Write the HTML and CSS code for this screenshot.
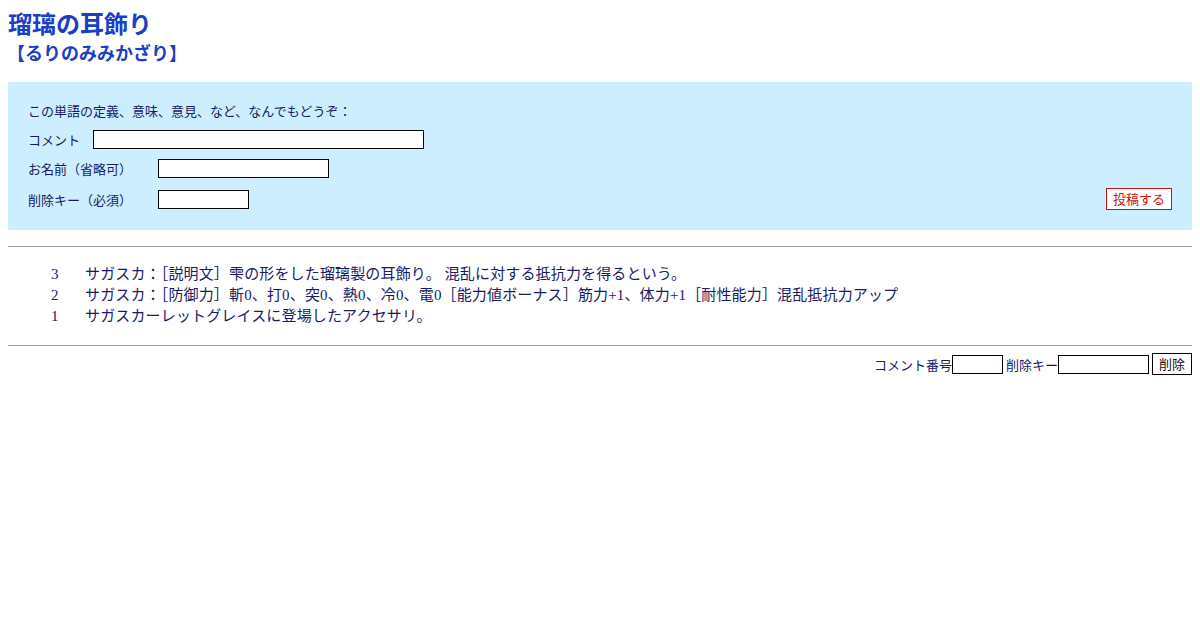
FILE: index.html
```html
<!DOCTYPE html>
<html lang="ja">
<head>
<meta charset="utf-8">
<title>瑠璃の耳飾り</title>
<link rel="stylesheet" href="styles.css">
</head>
<body>
<header class="head">
  <h1 class="title">瑠璃の耳飾り</h1>
  <div class="reading">【るりのみみかざり】</div>
</header>

<form class="post-box">
  <div class="intro">この単語の定義、意味、意見、など、なんでもどうぞ：</div>
  <div class="row">
    <label class="lbl lbl-short">コメント</label>
    <input class="field field-comment" type="text">
  </div>
  <div class="row">
    <label class="lbl">お名前（省略可）</label>
    <input class="field field-name" type="text">
  </div>
  <div class="row row-last">
    <label class="lbl">削除キー（必須）</label>
    <input class="field field-key" type="password">
    <button class="btn-post" type="button">投稿する</button>
  </div>
</form>

<hr class="rule rule-top">

<ol class="comments">
  <li class="comment"><span class="num">3</span><span class="text">サガスカ：［説明文］雫の形をした瑠璃製の耳飾り。 混乱に対する抵抗力を得るという。</span></li>
  <li class="comment"><span class="num">2</span><span class="text">サガスカ：［防御力］斬0、打0、突0、熱0、冷0、電0［能力値ボーナス］筋力+1、体力+1［耐性能力］混乱抵抗力アップ</span></li>
  <li class="comment"><span class="num">1</span><span class="text">サガスカーレットグレイスに登場したアクセサリ。</span></li>
</ol>

<hr class="rule rule-bottom">

<form class="delete-form">
  <label class="dlbl">コメント番号</label>
  <input class="field field-no" type="text">
  <label class="dlbl dlbl-gap">削除キー</label>
  <input class="field field-dkey" type="password">
  <button class="btn-del" type="button">削除</button>
</form>
</body>
</html>
```

FILE: styles.css
```css
html, body {
  margin: 0;
  padding: 0;
  background: #ffffff;
}
body {
  padding: 8px;
  font-family: "Liberation Serif", "Noto Sans CJK JP", serif;
  color: #1a1a66;
}
.head {
  font-family: "Noto Sans CJK JP", sans-serif;
  color: #1a3fc4;
}
.title {
  margin: 0;
  font-size: 24px;
  line-height: 30px;
  font-weight: bold;
}
.reading {
  font-size: 18px;
  line-height: 28px;
  font-weight: bold;
  margin-left: -1px;
}
.post-box {
  margin: 16px 0 0 0;
  background: #cceeff;
  padding: 20px 20px 20px 20px;
  display: flex;
  flex-direction: column;
  gap: 10px;
  font-family: "Noto Sans CJK JP", sans-serif;
  font-size: 13px;
  color: #1a1a66;
}
.intro {
  line-height: 18px;
}
.row {
  display: flex;
  align-items: center;
  height: 19px;
}
.row-last {
  height: 22px;
}
.lbl {
  width: 130px;
  flex: none;
  line-height: 19px;
}
.lbl-short {
  width: 65px;
}
.field {
  box-sizing: border-box;
  height: 19px;
  border: 1px solid #000000;
  background: #ffffff;
  padding: 0 2px;
  margin: 0;
  font-size: 13px;
  outline: none;
}
.field-comment { width: 331px; }
.field-name { width: 171px; }
.field-key { width: 91px; }
.btn-post {
  margin-left: auto;
  box-sizing: border-box;
  height: 22px;
  width: 66px;
  padding: 0;
  border: 1px solid #cc1111;
  background: #ffffff;
  color: #cc1111;
  font-family: "Noto Sans CJK JP", sans-serif;
  font-size: 13px;
  line-height: 20px;
  cursor: pointer;
}
.rule {
  border: 0;
  border-top: 1px solid #a0a0a0;
  height: 0;
}
.rule-top {
  margin: 16px 0 0 0;
}
.comments {
  list-style: none;
  margin: 17px 0 0 0;
  padding: 0 0 0 43px;
  font-size: 15px;
  line-height: 21px;
  letter-spacing: 0.15px;
}
.comment {
  display: flex;
}
.num {
  width: 34px;
  flex: none;
  color: #1a1a66;
}
.rule-bottom {
  margin: 18px 0 0 0;
}
.delete-form {
  margin: 7px 0 0 0;
  display: flex;
  justify-content: flex-end;
  align-items: center;
  height: 22px;
  font-family: "Noto Sans CJK JP", sans-serif;
  font-size: 13px;
  color: #1a1a66;
}
.field-no { width: 51px; }
.field-dkey { width: 91px; }
.dlbl-gap { margin-left: 3px; }
.btn-del {
  margin-left: 3px;
  box-sizing: border-box;
  width: 40px;
  height: 22px;
  padding: 0;
  border: 1px solid #000000;
  background: #ffffff;
  color: #111111;
  font-family: "Noto Sans CJK JP", sans-serif;
  font-size: 13px;
  line-height: 20px;
}
```
